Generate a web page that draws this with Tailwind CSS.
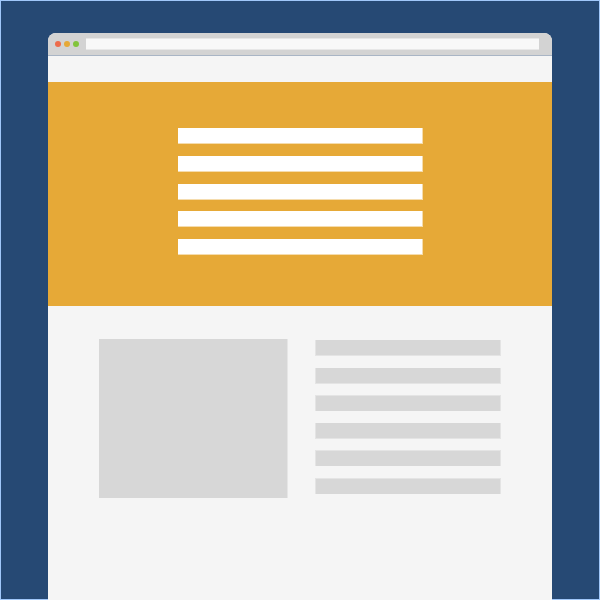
<!DOCTYPE html>
<html lang="en">
<head>
<meta charset="utf-8">
<meta name="viewport" content="width=device-width, initial-scale=1">
<title>Browser wireframe</title>
<script src="https://cdn.jsdelivr.net/npm/@tailwindcss/browser@4"></script>
</head>
<body class="bg-[#264974]">
<div class="flex min-h-screen flex-col border border-[#a0c7fa] px-[47px] pt-8">
  <div class="-mb-px flex grow flex-col overflow-hidden rounded-t-lg bg-[#f5f5f5]">
    <header class="flex h-[23px] items-center border-b border-[#a9b5c5] bg-[#d3d3d3] pr-[13px] pl-[7px]">
      <div class="flex gap-[3px]">
        <span class="size-1.5 rounded-full bg-[#ed6b4b]"></span>
        <span class="size-1.5 rounded-full bg-[#e6a937]"></span>
        <span class="size-1.5 rounded-full bg-[#82c43c]"></span>
      </div>
      <input type="text" aria-label="Address" class="ml-[7px] h-3 min-w-0 grow border-y border-[#e7e7e7] bg-[#f8f8f8] px-1 text-[8px] outline-none">
    </header>
    <div class="h-[26px]"></div>
    <main>
      <section class="bg-[#e6a937] pt-[46px] pr-[129px] pb-[51px] pl-[130px]">
        <div class="flex h-[127px] flex-col justify-between">
          <div class="h-4 border-r border-b border-[#f5dcad] bg-white"></div>
          <div class="h-4 border-r border-b border-[#f5dcad] bg-white"></div>
          <div class="h-4 border-r border-b border-[#f5dcad] bg-white"></div>
          <div class="h-4 border-r border-b border-[#f5dcad] bg-white"></div>
          <div class="h-4 border-r border-b border-[#f5dcad] bg-white"></div>
        </div>
      </section>
      <section class="grid grid-cols-[189fr_186fr] gap-x-[27px] px-[51px] pt-[33px]">
        <div class="h-[159px] border-r border-[#e6e6e6] bg-[#d7d7d7]"></div>
        <div class="mt-px flex h-[154px] flex-col justify-between">
          <div class="h-4 border-x border-b border-[#e4e4e4] bg-[#d7d7d7]"></div>
          <div class="h-4 border-x border-b border-[#e4e4e4] bg-[#d7d7d7]"></div>
          <div class="h-4 border-x border-t border-[#e4e4e4] bg-[#d7d7d7]"></div>
          <div class="h-4 border-x border-b border-[#e4e4e4] bg-[#d7d7d7]"></div>
          <div class="h-4 border-x border-t border-[#e4e4e4] bg-[#d7d7d7]"></div>
          <div class="h-4 border-x border-t border-[#e4e4e4] bg-[#d7d7d7]"></div>
        </div>
      </section>
    </main>
  </div>
</div>
</body>
</html>
